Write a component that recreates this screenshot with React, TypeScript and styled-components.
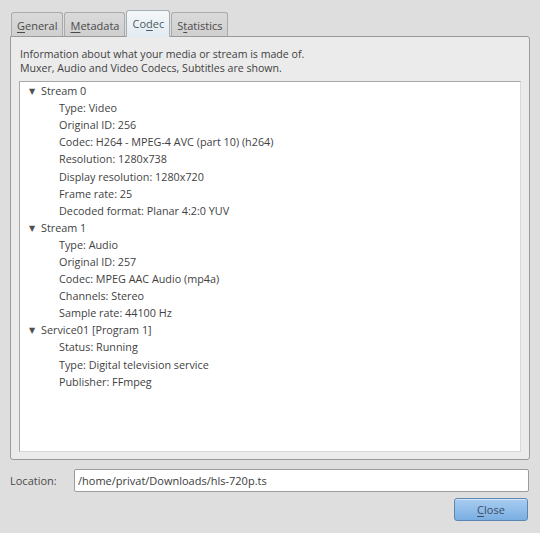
import React, { useState } from "react";
import styled, { createGlobalStyle, css } from "styled-components";

const GlobalStyle = createGlobalStyle`
  html, body {
    margin: 0;
    padding: 0;
    background: #dedede;
  }
  body {
    font-family: "Open Sans", "Noto Sans", "DejaVu Sans", sans-serif;
    font-size: 11px;
    color: #3c3c3c;
  }
`;

type Node = { label: string; children: string[] };

const streams: Node[] = [
  {
    label: "Stream 0",
    children: [
      "Type: Video",
      "Original ID: 256",
      "Codec: H264 - MPEG-4 AVC (part 10) (h264)",
      "Resolution: 1280x738",
      "Display resolution: 1280x720",
      "Frame rate: 25",
      "Decoded format: Planar 4:2:0 YUV",
    ],
  },
  {
    label: "Stream 1",
    children: [
      "Type: Audio",
      "Original ID: 257",
      "Codec: MPEG AAC Audio (mp4a)",
      "Channels: Stereo",
      "Sample rate: 44100 Hz",
    ],
  },
  {
    label: "Service01 [Program 1]",
    children: [
      "Status: Running",
      "Type: Digital television service",
      "Publisher: FFmpeg",
    ],
  },
];

const tabs = [
  { label: "General", key: "G", rest: "eneral" },
  { label: "Metadata", key: "M", rest: "etadata" },
  { label: "Codec", pre: "Co", key: "d", rest: "ec" },
  { label: "Statistics", pre: "S", key: "t", rest: "atistics" },
];

const App = () => {
  const [active, setActive] = useState("Codec");

  return (
    <>
      <GlobalStyle />
      <Dialog>
        <TabBar>
          {tabs.map((t) => (
            <Tab
              key={t.label}
              $active={active === t.label}
              onClick={() => setActive(t.label)}
            >
              {t.pre}
              <u>{t.key}</u>
              {t.rest}
            </Tab>
          ))}
        </TabBar>
        <Panel>
          <Description>
            Information about what your media or stream is made of.
            <br />
            Muxer, Audio and Video Codecs, Subtitles are shown.
          </Description>
          <Tree>
            {streams.map((s) => (
              <React.Fragment key={s.label}>
                <TreeRow>
                  <Arrow>▼</Arrow>
                  {s.label}
                </TreeRow>
                {s.children.map((c) => (
                  <ChildRow key={c}>{c}</ChildRow>
                ))}
              </React.Fragment>
            ))}
          </Tree>
        </Panel>
        <LocationRow>
          <LocationLabel>Location:</LocationLabel>
          <LocationInput
            readOnly
            value="/home/privat/Downloads/hls-720p.ts"
          />
        </LocationRow>
        <Footer>
          <CloseButton>
            <u>C</u>lose
          </CloseButton>
        </Footer>
      </Dialog>
    </>
  );
};

export default App;

const Dialog = styled.div`
  width: 540px;
  height: 533px;
  box-sizing: border-box;
  padding: 9px 10px 0 10px;
  display: flex;
  flex-direction: column;
`;

const TabBar = styled.div`
  display: flex;
  align-items: flex-end;
  padding-left: 1px;
  gap: 1px;
  height: 27px;
  position: relative;
  z-index: 1;
`;

const Tab = styled.div<{ $active: boolean }>`
  box-sizing: border-box;
  height: 24px;
  padding: 1px 5px 0;
  display: flex;
  align-items: center;
  border: 1px solid #aaaaaa;
  border-bottom: none;
  border-radius: 3px 3px 0 0;
  background: linear-gradient(#dadada, #cfcfcf);
  color: #4a4a4a;
  font-size: 11px;
  cursor: default;
  u {
    text-decoration-thickness: 1px;
    text-underline-offset: 2px;
  }
  ${(p) =>
    p.$active &&
    css`
      height: 27px;
      margin-bottom: -1px;
      padding: 0 5px 2px;
      background: linear-gradient(#f4f7f9, #e2ebf1);
      border-color: #a4aeb5;
      color: #4a5a66;
    `}
`;

const Panel = styled.div`
  box-sizing: border-box;
  width: 520px;
  height: 424px;
  border: 1px solid #9a9a9a;
  border-radius: 0 3px 3px 3px;
  background: #ebebeb;
  padding: 4px 8px 7px 8px;
  display: flex;
  flex-direction: column;
`;

const Description = styled.div`
  font-size: 10.6px;
  line-height: 14px;
  color: #3f3f3f;
  margin: 6px 0 0 1px;
  height: 34px;
`;

const Tree = styled.div`
  flex: 1;
  background: #ffffff;
  border: 1px solid #a8a8a8;
  border-right-color: #d8d8d8;
  border-bottom-color: #d8d8d8;
`;

const TreeRow = styled.div`
  height: 17.1px;
  line-height: 17px;
  font-size: 10.8px;
  display: flex;
  align-items: center;
  padding-left: 9px;
  color: #3f3f3f;
  white-space: nowrap;
`;

const Arrow = styled.span`
  font-size: 8px;
  width: 12px;
  color: #505050;
`;

const ChildRow = styled(TreeRow)`
  padding-left: 39px;
`;

const LocationRow = styled.div`
  display: flex;
  align-items: center;
  margin-top: 8px;
  height: 24px;
`;

const LocationLabel = styled.div`
  width: 64px;
  color: #4a4a4a;
`;

const LocationInput = styled.input`
  box-sizing: border-box;
  width: 455px;
  height: 23px;
  border: 1px solid #9c9c9c;
  border-radius: 2px;
  background: #ffffff;
  font-family: inherit;
  font-size: 11px;
  color: #3c3c3c;
  padding: 0 3px;
  outline: none;
`;

const Footer = styled.div`
  display: flex;
  justify-content: flex-end;
  margin-top: 6px;
  padding-right: 2px;
`;

const CloseButton = styled.button`
  box-sizing: border-box;
  width: 74px;
  height: 23px;
  border: 1px solid #5d87b3;
  border-radius: 3px;
  background: linear-gradient(#a9cdf1, #7aaee2);
  color: #3c4e63;
  font-family: inherit;
  font-size: 11px;
  box-shadow: inset 0 1px 0 rgba(255, 255, 255, 0.5);
  u {
    text-underline-offset: 2px;
  }
`;
